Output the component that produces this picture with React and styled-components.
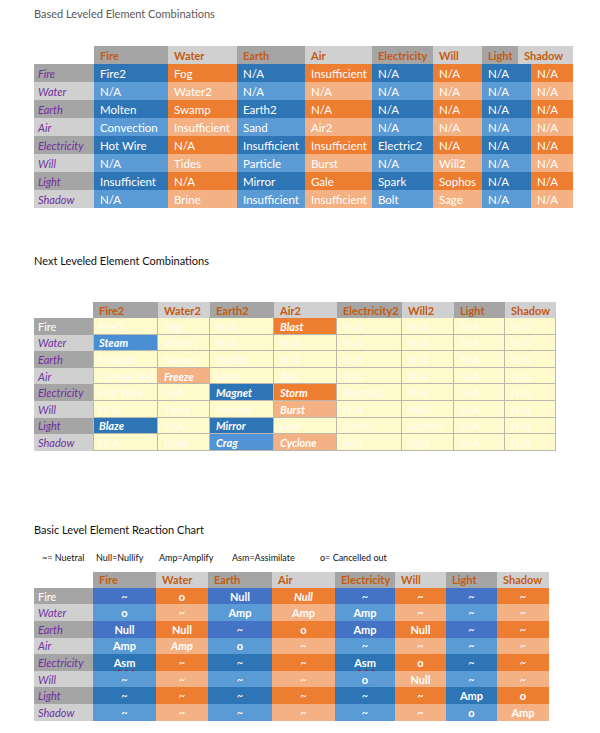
import React from 'react';
import styled, { createGlobalStyle } from 'styled-components';

const GlobalStyle = createGlobalStyle`
	body {
		margin: 0;
		background: #fff;
		font-family: Lato, "Open Sans", sans-serif;
	}
`;

const BLUE = '#2e75b6';
const BLUE_LIGHT = '#5b9bd5';
const ROYAL = '#4472c4';
const ORANGE = '#ed7d31';
const ORANGE_LIGHT = '#f4b183';
const GREY = '#a5a5a5';
const GREY_LIGHT = '#d0d0d0';

const Page = styled.div`
	display: flex;
	flex-direction: column;
	padding: 7px 0 0 34px;
`;

const Title = styled.div`
	height: 14px;
	line-height: 14px;
	font-size: 11px;
	color: ${(p) => p.$tone || '#111'};
	margin-top: ${(p) => p.$gap || 0}px;
`;

const Legend = styled.div`
	display: flex;
	height: 12px;
	line-height: 12px;
	font-size: 9px;
	color: #111;
	margin-top: 15px;
	padding-left: 8px;
`;

const LegendItem = styled.span`
	width: ${(p) => p.$w}px;
	white-space: nowrap;
`;

const Table = styled.div`
	display: flex;
	flex-direction: column;
	margin-top: ${(p) => p.$gap}px;
	font-size: ${(p) => p.$size || 11}px;
`;

const Row = styled.div`
	display: flex;
	height: ${(p) => p.$h}px;
`;

const Blank = styled.div`
	width: ${(p) => p.$w}px;
	flex: none;
`;

const HeadCell = styled.div`
	width: ${(p) => p.$w}px;
	flex: none;
	box-sizing: border-box;
	padding-left: 6px;
	display: flex;
	align-items: center;
	background: ${(p) => (p.$dark ? GREY : GREY_LIGHT)};
	color: #c55a11;
	font-weight: 700;
	font-size: 11px;
	white-space: nowrap;
	overflow: hidden;
`;

const Label = styled.div`
	width: ${(p) => p.$w}px;
	flex: none;
	box-sizing: border-box;
	padding-left: 4px;
	display: flex;
	align-items: center;
	background: ${(p) => (p.$dark ? GREY : GREY_LIGHT)};
	color: ${(p) => (p.$plain ? '#fff' : '#7030a0')};
	font-style: ${(p) => (p.$plain ? 'normal' : 'italic')};
	font-size: 11px;
`;

const Cell = styled.div`
	width: ${(p) => p.$w}px;
	flex: none;
	box-sizing: border-box;
	display: flex;
	align-items: center;
	justify-content: ${(p) => (p.$center ? 'center' : 'flex-start')};
	padding-left: ${(p) => (p.$center ? 0 : 6)}px;
	background: ${(p) => p.$bg};
	color: #fff;
	white-space: nowrap;
	overflow: hidden;
`;

const NoteCell = styled(Cell)`
	box-shadow: inset -1px -1px 0 #b9b9b0 ${(p) => (p.$first ? ', inset 1px 0 0 #b9b9b0' : '')};
	color: ${(p) => (p.$hit ? '#fff' : 'rgba(255, 255, 255, 0.75)')};
	font-weight: ${(p) => (p.$hit ? 700 : 400)};
	font-style: ${(p) => (p.$hit ? 'italic' : 'normal')};
`;

const ReactCell = styled(Cell)`
	font-weight: ${(p) => (p.$light ? 400 : 700)};
	font-style: ${(p) => (p.$italic ? 'italic' : 'normal')};
`;

const Squiggle = styled.span`
	text-decoration: underline wavy #c00000;
	text-decoration-thickness: 1px;
	text-underline-offset: 2px;
`;

const ELEMENTS = ['Fire', 'Water', 'Earth', 'Air', 'Electricity', 'Will', 'Light', 'Shadow'];

const baseData = [
	['Fire2', 'Fog', 'N/A', 'Insufficient', 'N/A', 'N/A', 'N/A', 'N/A'],
	['N/A', 'Water2', 'N/A', 'N/A', 'N/A', 'N/A', 'N/A', 'N/A'],
	['Molten', 'Swamp', 'Earth2', 'N/A', 'N/A', 'N/A', 'N/A', 'N/A'],
	['Convection', 'Insufficient', 'Sand', 'Air2', 'N/A', 'N/A', 'N/A', 'N/A'],
	['Hot Wire', 'N/A', 'Insufficient', 'Insufficient', 'Electric2', 'N/A', 'N/A', 'N/A'],
	['N/A', 'Tides', 'Particle', 'Burst', 'N/A', 'Will2', 'N/A', 'N/A'],
	['Insufficient', 'N/A', 'Mirror', 'Gale', 'Spark', 'Sophos', 'N/A', 'N/A'],
	['N/A', 'Brine', 'Insufficient', 'Insufficient', 'Bolt', 'Sage', 'N/A', 'N/A'],
];

const nextHits = {
	'0-3': ['Blast', ORANGE],
	'1-0': ['Steam', '#4a8fd3'],
	'3-1': ['Freeze', ORANGE_LIGHT],
	'4-2': ['Magnet', BLUE],
	'4-3': ['Storm', ORANGE],
	'5-3': ['Burst', ORANGE_LIGHT],
	'6-0': ['Blaze', BLUE],
	'6-2': ['Mirror', BLUE],
	'7-2': ['Crag', '#5293d6'],
	'7-3': ['Cyclone', ORANGE_LIGHT],
};

const reactData = [
	['~', 'o', 'Null', 'Null*', '~', '~', '~', '~'],
	['o', '~', 'Amp', 'Amp', 'Amp', '~', '~', '~'],
	['Null', 'Null', '~', 'o', 'Amp', 'Null', '~', '~'],
	['Amp', 'Amp*', 'o', '~', '~', '~', '~', '~'],
	['Asm', '~', '~', '~', 'Asm', 'o', '~', '~'],
	['~', '~', '~', '~', 'o', 'Null', '~', '~'],
	['~', '~', '~', '~', '~', '~', 'Amp', 'o'],
	['~', '~', '~', '~', '~', '~', 'o', 'Amp'],
];

const tone = (col, row, darkBlue = BLUE) => {
	const dark = row % 2 === 0;
	if (col % 2 === 0) return dark ? darkBlue : BLUE_LIGHT;
	return dark ? ORANGE : ORANGE_LIGHT;
};

const BaseTable = () => {
	const head = [74, 69, 68, 67, 61, 49, 36, 55];
	const body = [74, 69, 68, 67, 61, 49, 49, 42];
	return (
		<Table $gap={25} $size={11.5}>
			<Row $h={18}>
				<Blank $w={60} />
				{ELEMENTS.map((el, i) => <HeadCell key={el} $w={head[i]} $dark={i % 2 === 0}>{el}</HeadCell>)}
			</Row>
			{ELEMENTS.map((el, r) => (
				<Row key={el} $h={18}>
					<Label $w={60} $dark={r % 2 === 0}>{el}</Label>
					{baseData[r].map((v, c) => <Cell key={c} $w={body[c]} $bg={tone(c, r)}>{v}</Cell>)}
				</Row>
			))}
		</Table>
	);
};

const NextTable = () => {
	const cols = ['Fire2', 'Water2', 'Earth2', 'Air2', 'Electricity2', 'Will2', 'Light', 'Shadow'];
	const widths = [65, 52, 64, 63, 65, 52, 51, 51];
	return (
		<Table $gap={34}>
			<Row $h={16}>
				<Blank $w={59} />
				{cols.map((el, i) => <HeadCell key={el} $w={widths[i]} $dark={i % 2 === 0}>{el}</HeadCell>)}
			</Row>
			{ELEMENTS.map((el, r) => (
				<Row key={el} $h={16.6}>
					<Label $w={59} $dark={r % 2 === 0} $plain={r === 0}>{el}</Label>
					{widths.map((w, c) => {
						const hit = nextHits[`${r}-${c}`];
						return (
							<NoteCell key={c} $w={w} $first={c === 0} $hit={!!hit} $bg={hit ? hit[1] : '#fffacb'}>
								{hit ? hit[0] : baseData[r][c]}
							</NoteCell>
						);
					})}
				</Row>
			))}
		</Table>
	);
};

const ReactionTable = () => {
	const widths = [63, 52, 64, 63, 60, 51, 51, 52];
	return (
		<Table $gap={8}>
			<Row $h={16}>
				<Blank $w={59} />
				{ELEMENTS.map((el, i) => <HeadCell key={el} $w={widths[i]} $dark={i % 2 === 0}>{el}</HeadCell>)}
			</Row>
			{ELEMENTS.map((el, r) => (
				<Row key={el} $h={16.6}>
					<Label $w={59} $dark={r % 2 === 0} $plain={r === 0}>{el}</Label>
					{reactData[r].map((v, c) => {
						const italic = v.endsWith('*');
						const text = v.replace('*', '');
						return (
							<ReactCell
								key={c}
								$w={widths[c]}
								$center
								$italic={italic}
								$light={text === '~'}
								$bg={tone(c, r, r < 4 ? ROYAL : BLUE)}
							>
								{text === 'Asm' ? <Squiggle>{text}</Squiggle> : text}
							</ReactCell>
						);
					})}
				</Row>
			))}
		</Table>
	);
};

export default function App() {
	return (
		<Page>
			<GlobalStyle />
			<Title $tone="#595959">Based Leveled Element Combinations</Title>
			<BaseTable />
			<Title $gap={46}>Next Leveled Element Combinations</Title>
			<NextTable />
			<Title $gap={72}>Basic Level Element Reaction Chart</Title>
			<Legend>
				<LegendItem $w={54}>~= Nuetral</LegendItem>
				<LegendItem $w={63}>Null=Nullify</LegendItem>
				<LegendItem $w={73}>Amp=Amplify</LegendItem>
				<LegendItem $w={88}>Asm=Assimilate</LegendItem>
				<LegendItem $w={80}>o= Cancelled out</LegendItem>
			</Legend>
			<ReactionTable />
		</Page>
	);
}
